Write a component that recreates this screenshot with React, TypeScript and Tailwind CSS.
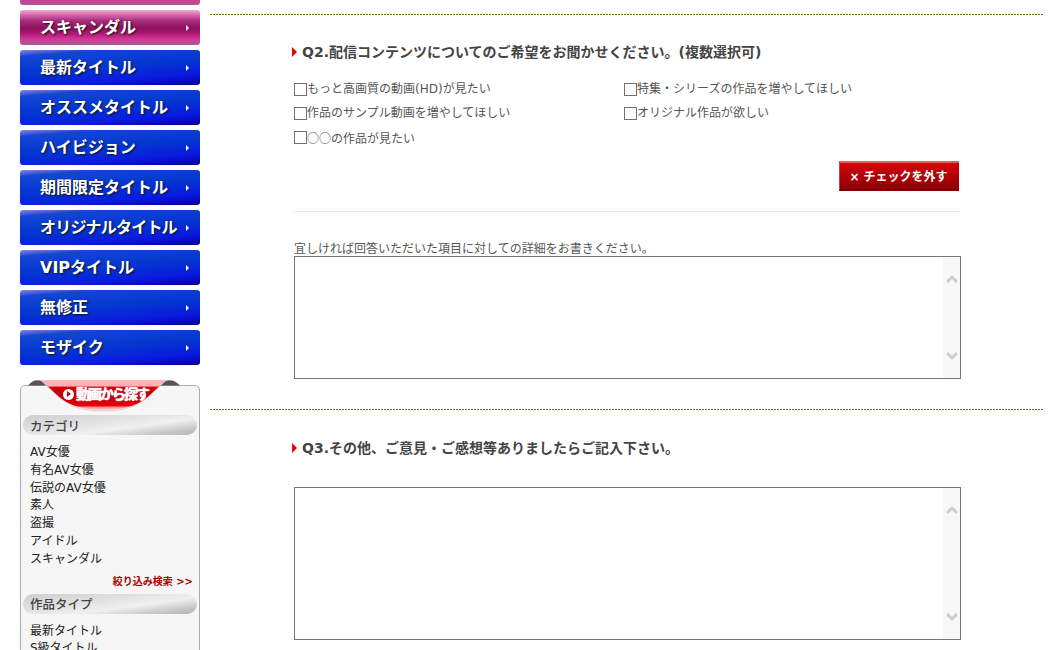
const pinkBtn =
  'bg-[linear-gradient(180deg,#f3a6d2_0%,#d868ab_14%,#a82f7c_30%,#8c0f5c_52%,#b01a75_68%,#d43a98_84%,#a85a8e_100%)]';
const blueBtn =
  'bg-[linear-gradient(175deg,#7f86e6_0%,#5560de_7%,#1446d4_13%,#0335d0_50%,#0a1ce0_76%,#0808c4_90%,#04046c_100%)]';
const brownLine = 'h-px bg-[repeating-linear-gradient(90deg,#85680f_0_2px,transparent_2px_3px)]';

const navItems = ['最新タイトル', 'オススメタイトル', 'ハイビジョン', '期間限定タイトル', 'オリジナルタイトル', 'VIPタイトル', '無修正', 'モザイク'];
const categories = ['AV女優', '有名AV女優', '伝説のAV女優', '素人', '盗撮', 'アイドル', 'スキャンダル'];
const types = ['最新タイトル', 'S級タイトル'];

function NavButton({ label, pink }: { label: string; pink?: boolean }) {
  return (
    <a className={`flex items-center justify-between h-[35px] rounded-[3px] pl-5 pr-[11px] text-[16px] font-bold text-white [text-shadow:1px_1px_2px_#111] ${pink ? pinkBtn : blueBtn}`}>
      <span className={label.length === 9 ? 'whitespace-nowrap tracking-[-0.8px]' : 'whitespace-nowrap'}>{label}</span>
      <span className="w-0 h-0 border-y-[3px] border-y-transparent border-l-[3px] border-l-white" />
    </a>
  );
}

function Pill({ label }: { label: string }) {
  return (
    <div className="mx-[2px] h-5 rounded-full pl-[7px] pt-[1.5px] text-[12.5px] leading-5 font-medium text-[#444] bg-[linear-gradient(172deg,#cfcfcf_0%,#e2e2e2_40%,#f0f0f0_62%,#c6c6c6_85%,#b4b4b4_100%)]">
      {label}
    </div>
  );
}

function Scrollarea({ height }: { height: string }) {
  return (
    <div className={`flex w-[667px] border border-[#767676] ${height}`}>
      <textarea className="flex-1 resize-none outline-none bg-white" />
      <div className="flex w-[17px] flex-col items-center justify-between bg-[#f8f8f8] py-[17px]">
        <svg width="12" height="9" viewBox="0 0 12 9"><path d="M1 8 L6 3 L11 8" fill="none" stroke="#cdcdcd" strokeWidth="3" /></svg>
        <svg width="12" height="9" viewBox="0 0 12 9"><path d="M1 1 L6 6 L11 1" fill="none" stroke="#cdcdcd" strokeWidth="3" /></svg>
      </div>
    </div>
  );
}

function Question({ label }: { label: string }) {
  return (
    <h2 className="flex items-center gap-[5px] pl-[82px] text-[14px] leading-5 font-bold text-[#444]">
      <span className="w-0 h-0 border-y-[5px] border-y-transparent border-l-[5px] border-l-[#e60000]" />
      {label}
    </h2>
  );
}

function Check({ label, cjk }: { label: string; cjk?: boolean }) {
  return (
    <label className={`flex h-[24.25px] items-center text-[12px] text-[#555] ${cjk ? "font-['Noto_Sans_CJK_JP',sans-serif]" : ''}`}>
      <input type="checkbox" className="h-[13px] w-[13px] appearance-none border border-[#707070] bg-white" />
      {label}
    </label>
  );
}

export default function App() {
  return (
    <div className="flex h-[650px] overflow-hidden bg-white font-['DejaVu_Sans','Noto_Sans_CJK_JP',sans-serif]">
      {/* サイドメニュー */}
      <aside className="w-[180px] ml-5 shrink-0">
        <div className={`h-[5px] rounded-b-[3px] ${pinkBtn} bg-bottom bg-[length:100%_35px]`} />
        <div className="mt-[5px] flex flex-col gap-[5px]">
          <NavButton label="スキャンダル" pink />
          {navItems.map((item) => (
            <NavButton key={item} label={item} />
          ))}
        </div>

        <div className="relative mt-5 h-[300px] rounded-[5px] border border-[#aaa] bg-[#f6f6f6] pt-[29px]">
          {/* 動画から探す タブ */}
          <svg className="absolute -left-px -top-[6px]" width="180" height="36" viewBox="0 0 180 36">
            <defs>
              <linearGradient id="tabRed" x1="0" y1="0" x2="0" y2="1">
                <stop offset="0" stopColor="#ffb8b8" />
                <stop offset="0.2" stopColor="#ffb0b0" />
                <stop offset="0.24" stopColor="#d4000c" />
                <stop offset="0.55" stopColor="#b80008" />
                <stop offset="0.85" stopColor="#e8000c" />
                <stop offset="0.92" stopColor="#ff9a9a" />
                <stop offset="1" stopColor="#ffc8c8" />
              </linearGradient>
            </defs>
            <path d="M8 5.5 Q14 -2 22 1 L26 5.5Z M141 5.5 L145 1 Q153 -2 160 5.5Z" fill="#555" />
            <path d="M20 0 H147 C130 12 125 30 83.5 30 C42 30 37 12 20 0Z" fill="url(#tabRed)" />
            <path d="M21 1 C37 12 42 31 83.5 31 C125 31 130 12 146 1" fill="none" stroke="#bbb" strokeWidth="1" opacity="0.6" />
          </svg>
          <div className="absolute left-[42px] top-0 flex items-center gap-[2px] text-[14px] leading-4 font-bold text-white [text-shadow:0_0_1px_#fff,0_0_1px_#fff]">
            <span className="flex h-[11px] w-[11px] items-center justify-center rounded-full bg-white">
              <span className="ml-[1px] h-0 w-0 border-y-[3px] border-y-transparent border-l-[4px] border-l-[#c00]" />
            </span>
            <span className="tracking-[-2px]">動画から探す</span>
          </div>

          <Pill label="カテゴリ" />
          <ul className="mt-[9px] pl-[9px] text-[12px] leading-[17.8px] text-[#222]">
            {categories.map((c) => (
              <li key={c}>{c}</li>
            ))}
          </ul>
          <p className="mt-[6px] pr-[6px] text-right text-[10px] leading-[14px] font-bold text-[#b00000]">絞り込み検索 &gt;&gt;</p>
          <div className="mt-[5px]">
            <Pill label="作品タイプ" />
          </div>
          <ul className="mt-[9px] pl-[9px] text-[12px] leading-[17.8px] text-[#222]">
            {types.map((c) => (
              <li key={c}>{c}</li>
            ))}
          </ul>
        </div>
      </aside>

      {/* アンケート */}
      <main className="ml-[10px] w-[834px] shrink-0 pt-[14px]">
        <div className={brownLine} />
        <div className="mt-[27px]">
          <Question label="Q2.配信コンテンツについてのご希望をお聞かせください。(複数選択可)" />
        </div>
        <div className="ml-[84px] mt-[15px] grid w-[665px] grid-cols-[330px_1fr]">
          <Check label="もっと高画質の動画(HD)が見たい" />
          <Check label="特集・シリーズの作品を増やしてほしい" />
          <Check label="作品のサンプル動画を増やしてほしい" />
          <Check label="オリジナル作品が欲しい" />
          <Check label="○○の作品が見たい" cjk />
        </div>
        <div className="ml-[84px] w-[665px]">
          <div className="mt-[11.25px] flex justify-end">
            <button className="h-[30px] w-[120px] border-t-2 border-l border-b-2 border-t-[#e85a60] border-l-[#c84048] border-b-[#7a0000] bg-[linear-gradient(180deg,#dc0008_0%,#b00008_50%,#900006_100%)] pt-px pr-[2px] text-[12px] font-bold text-white">
              × チェックを外す
            </button>
          </div>
          <div className="mt-5 border-t border-dotted border-[#e0cccc]" />
        </div>
        <div className="ml-[84px] mt-[30px]">
          <p className="text-[12px] leading-[14px] text-[#555]">宜しければ回答いただいた項目に対しての詳細をお書きください。</p>
          <Scrollarea height="h-[123px]" />
        </div>
        <div className={`mt-[30px] ${brownLine}`} />
        <div className="mt-[28px]">
          <Question label="Q3.その他、ご意見・ご感想等ありましたらご記入下さい。" />
        </div>
        <div className="ml-[84px] mt-[29px]">
          <Scrollarea height="h-[153px]" />
        </div>
      </main>
    </div>
  );
}
